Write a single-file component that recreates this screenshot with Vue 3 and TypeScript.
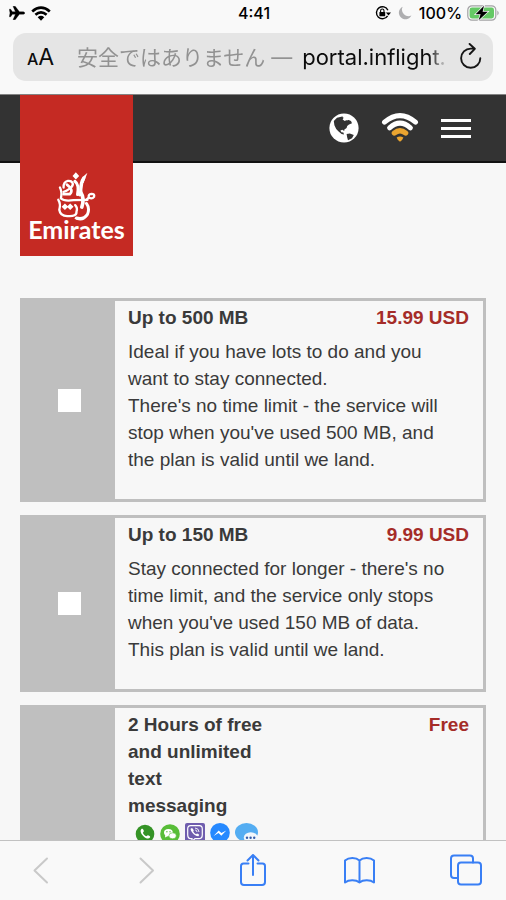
<script setup lang="ts">
import { ref } from 'vue'

interface Plan {
  id: string
  lines: string[]
  price: string
  description: string[]
  messaging: boolean
}

const plans: Plan[] = [
  {
    id: 'mb500',
    lines: ['Up to 500 MB'],
    price: '15.99 USD',
    description: [
      'Ideal if you have lots to do and you want to stay connected.',
      "There's no time limit - the service will stop when you've used 500 MB, and the plan is valid until we land.",
    ],
    messaging: false,
  },
  {
    id: 'mb150',
    lines: ['Up to 150 MB'],
    price: '9.99 USD',
    description: [
      "Stay connected for longer - there's no time limit, and the service only stops when you've used 150 MB of data.",
      'This plan is valid until we land.',
    ],
    messaging: false,
  },
  {
    id: 'free',
    lines: ['2 Hours of free', 'and unlimited text', 'messaging'],
    price: 'Free',
    description: [],
    messaging: true,
  },
]

const selected = ref<string>('')
</script>

<template>
  <div class="screen">
    <div class="status">
      <div class="status-side">
        <svg class="plane" viewBox="0 0 16 14"><path d="M0.3 3.2H1.7L3.4 5.7H6.4L4 0.3H6.2L10.4 5.7H13.6C16.6 5.7 16.6 8.3 13.6 8.3H10.4L6.2 13.7H4L6.4 8.3H3.4L1.7 10.8H0.3L1 7Z" stroke="#000" stroke-width="0.3" /></svg>
        <svg class="wifi" viewBox="0 0 20 15"><path d="M1.2 5.4Q10 -2.2 18.8 5.4M4.4 8.7Q10 4 15.6 8.7" fill="none" stroke="#000" stroke-width="2.7" /><path d="M6.7 11.2Q10 8.5 13.3 11.2L10 14.7Z" /></svg>
      </div>
      <span class="time">4:41</span>
      <div class="status-side right">
        <svg class="lock" viewBox="0 0 16 16"><path d="M12.6 10.8A6 6 0 1 1 12.9 5.2" fill="none" stroke="#000" stroke-width="1.4" /><path d="M10.9 7.4H16L13.5 10.6Z" /><rect x="4.4" y="6.9" width="5.8" height="4.4" rx="0.6" /><path d="M5.6 7V5.7A1.7 1.7 0 0 1 9 5.7V7" fill="none" stroke="#000" stroke-width="1.1" /></svg>
        <svg class="moon" viewBox="0 0 14 14"><path d="M4.7 0.7A6.6 6.6 0 1 0 13.4 9.6A6.6 6.6 0 0 1 4.7 0.7Z" fill="#aeaeb0" /></svg>
        <span class="percent">100%</span>
        <svg class="battery" viewBox="0 0 32 16"><rect x="0.8" y="0.8" width="28" height="14.4" rx="4.2" fill="none" stroke="#a2a2a4" stroke-width="1.2" /><rect x="2.6" y="2.6" width="24.4" height="10.8" rx="2.4" fill="#65c965" /><path d="M30.4 5.5Q33 8 30.4 10.5Z" fill="#a2a2a4" /><path d="M17 0.8L8.6 9.2H13.6L11.6 15.2L20.8 6.8H15.6Z" stroke="#f9f9f9" stroke-width="1.4" paint-order="stroke" /></svg>
      </div>
    </div>

    <div class="address-row">
      <div class="address">
        <button class="text-size" type="button" aria-label="Text size"><span class="small-a">A</span><span class="big-a">A</span></button>
        <button class="url" type="button"><span class="insecure">安全ではありません — </span>portal.inflight.</button>
        <button class="reload" type="button" aria-label="Reload">
          <svg viewBox="0 0 24 28"><path d="M21.3 15.2A9.6 9.6 0 1 1 11.7 5.6H15.6M10.6 1L15.8 5.8L10.8 11" fill="none" stroke="#161616" stroke-width="1.9" stroke-linecap="round" stroke-linejoin="round" /></svg>
        </button>
      </div>
    </div>

    <div class="page">
      <header class="site-header">
        <a class="logo" href="#" aria-label="Emirates">
          <svg class="emblem" viewBox="172 246 122 148" aria-hidden="true">
            <g fill="none" stroke="#fff" stroke-linecap="round">
              <path d="M255 264Q246 278 246 298T242 314" stroke-width="10" />
              <path d="M228 274Q242 284 236 314" stroke-width="9" />
              <path d="M194 293C193 268 220 268 222 282C222 292 203 304 194 306" stroke-width="7" />
              <path d="M204 284Q226 300 213 313H194" stroke-width="8" />
              <path d="M183 293Q190 306 186 326Q196 335 224 331L266 330" stroke-width="7" />
              <path d="M246 308Q258 326 249 352" stroke-width="11" />
              <path d="M270 323Q268 313 278 312Q289 312 286 321Q280 329 270 323L262 331" stroke-width="7" />
              <path d="M178 330Q186 342 181 360Q184 380 207 379Q234 381 233 366Q237 354 229 346" stroke-width="7" />
              <path d="M263 341Q274 356 266 374Q254 391 233 385" stroke-width="9" />
            </g>
            <path d="M231 247L241 258L231 269L221 258ZM198 341L208 351L198 361L188 351ZM214 341L224 351L214 361L204 351ZM266 248Q254 256 246 272L254 280ZM225 386Q252 404 270 374L258 386Z" fill="#fff" />
          </svg>
          <span class="wordmark">Emirates</span>
        </a>
        <nav class="header-nav">
          <button class="nav-button globe" type="button" aria-label="Language">
            <svg viewBox="0 0 30 30"><circle cx="15" cy="15" r="14.6" fill="#fff" /><path d="M4.8 8.1L8 4.7L13.2 3.5L15 4.4L13.6 6.4L15.8 8L18.5 6.4L22 8L23 10.3L20 11.4L18.2 13L17.6 15L15.4 16.4L15.2 18L13.4 16.8L11.4 17.4L12.4 19.3L14.4 19.4L15 21.4L12.6 21L9.6 18.6L7.2 16L5.4 12.2ZM17.6 21L20.8 20.6L24.8 22L23 25.2L19 27.3L18.2 24.4Z" fill="#333" /><path d="M13.5 4.5L18 4L21.4 6L18 7.4L16 6.2Z" fill="#fff" /></svg>
          </button>
          <button class="nav-button signal" type="button" aria-label="Wi-Fi status">
            <svg viewBox="0 0 38 30"><g fill="none" stroke-linecap="round"><path d="M3.5 9.2Q19 -4 34.5 9.2" stroke="#fff" stroke-width="5" /><path d="M8.6 14.8Q19 5.6 29.4 14.8" stroke="#fff" stroke-width="5" /><path d="M13.4 20Q19 15.4 24.6 20" stroke="#eba530" stroke-width="5.4" /></g><path d="M15.6 24.6Q19 22.2 22.4 24.6Q21.5 27.5 19 28.8Q16.5 27.5 15.6 24.6Z" fill="#eba530" /></svg>
          </button>
          <button class="nav-button menu" type="button" aria-label="Menu"><span class="bar"></span><span class="bar"></span><span class="bar"></span></button>
        </nav>
      </header>

      <main class="plans">
        <label v-for="plan in plans" :key="plan.id" class="plan" :class="{ tall: plan.messaging }">
          <span class="pick"><input v-model="selected" type="radio" name="plan" :value="plan.id"></span>
          <span class="details">
            <span class="heading">
              <span class="title">
                <span v-for="line in plan.lines" :key="line" class="title-line">{{ line }}</span>
                <span v-if="plan.messaging" class="apps">
                  <svg viewBox="0 0 20 20"><circle cx="10" cy="11" r="9.3" fill="#359326" /><path d="M2.6 17.5L1 20L6 19Z" fill="#359326" /><path d="M6.2 6.2C5 7.6 5.4 10 8.2 13C11 15.8 13.7 16.3 15 14.6C15.6 13.6 14.8 13 13 12.2C12.1 12 11.8 13.6 10.8 13C9.6 12.4 8.5 11.2 8 10C8 9 9.2 8.8 8.8 7.8C8 5.8 7.4 5.4 6.2 6.2Z" fill="#fff" /></svg>
                  <svg viewBox="0 0 20 20"><circle cx="10" cy="11" r="9.8" fill="#58bd38" /><ellipse cx="8.4" cy="9.6" rx="4.4" ry="3.6" fill="#fff" /><path d="M5.4 11.6L5 14.4L8 13Z" fill="#fff" /><ellipse cx="12.6" cy="12.8" rx="3.7" ry="3" fill="#fff" stroke="#58bd38" stroke-width="0.6" /><g fill="#58bd38"><circle cx="6.9" cy="8.8" r="0.7" /><circle cx="10" cy="8.8" r="0.7" /></g></svg>
                  <svg viewBox="0 0 20 20"><rect width="20" height="20" rx="2" fill="#6f5dae" /><path d="M5.6 2.7H14.4Q17.3 2.7 17.3 6V11.6Q17.3 15.6 14.4 15.6H10L7 18.4V15.6H5.6Q2.7 15.6 2.7 11.6V6Q2.7 2.7 5.6 2.7Z" fill="none" stroke="#fff" stroke-width="1.2" /><path d="M6 5.2Q4.8 6.4 7.4 9.8T13.4 13.2Q15 12 13.4 11L12 10.4L11 11.3Q9 10.4 8.2 8.2L8.8 7.3L7.4 5.2Z" fill="#fff" /><path d="M10 5Q14 5.4 14 9M10.2 7Q12 7.2 12 9" fill="none" stroke="#fff" stroke-width="0.9" /></svg>
                  <svg viewBox="0 0 20 20"><circle cx="10" cy="9.8" r="9.8" fill="#2689ff" /><path d="M3.6 13L8.7 7.4L11.4 10.1L16.3 7.4L11.3 12.8L8.5 10.1Z" fill="#fff" /></svg>
                  <svg class="chat" viewBox="0 0 24 20"><ellipse cx="11.5" cy="9.3" rx="11.5" ry="9.3" fill="#54adf2" /><path d="M5 16L3 20H9Z" fill="#54adf2" /><ellipse cx="15.8" cy="14.6" rx="7" ry="5.4" fill="#f1f7fc" /><g fill="#345caa"><circle cx="12" cy="14.8" r="1.2" /><circle cx="15.6" cy="14.8" r="1.2" /><circle cx="19.2" cy="14.8" r="1.2" /></g></svg>
                </span>
              </span>
              <span class="price">{{ plan.price }}</span>
            </span>
            <span v-for="text in plan.description" :key="text" class="description">{{ text }}</span>
          </span>
        </label>
      </main>
    </div>

    <nav class="toolbar">
      <button type="button" aria-label="Back"><svg viewBox="0 0 34 34"><path d="M23 4.5L10.5 16.5L23 28.5" stroke="#c9c9c9" /></svg></button>
      <button type="button" aria-label="Forward"><svg viewBox="0 0 34 34"><path d="M10.5 4.5L23 16.5L10.5 28.5" stroke="#c9c9c9" /></svg></button>
      <button type="button" aria-label="Share"><svg viewBox="0 0 34 34"><path d="M12.5 9.5H7.5Q5 9.5 5 12V28Q5 31 8 31H26Q29 31 29 28V12Q29 9.5 26.5 9.5H21.5M17 21V1M11.5 6.5L17 1L22.5 6.5" /></svg></button>
      <button type="button" aria-label="Bookmarks"><svg viewBox="0 0 34 34"><path d="M17.5 6.5C14 3.2 7 3 3 6.5V28.5C7 25.5 14 25.8 17.5 28.5C21 25.8 28 25.5 32 28.5V6.5C28 3 21 3.2 17.5 6.5V28.5" /></svg></button>
      <button type="button" aria-label="Tabs"><svg viewBox="0 0 34 34"><rect x="10" y="8.5" width="23" height="22" rx="3" /><path d="M10 24H6Q3 24 3 21V4.5Q3 1.5 6 1.5H22Q25 1.5 25 4.5V8.5" /></svg></button>
    </nav>
  </div>
</template>

<style>
body {
  margin: 0;
  background: #f7f7f7;
}
</style>

<style scoped>
.screen {
  display: flex;
  flex-direction: column;
  height: 100vh;
  overflow: hidden;
  background: #f7f7f7;
  color: #3a3a3a;
  font-family: "Liberation Sans", "Noto Sans CJK JP", sans-serif;
}
button {
  margin: 0;
  padding: 0;
  border: 0;
  background: none;
  color: inherit;
  font: inherit;
}
svg {
  display: block;
}
.status {
  display: flex;
  flex-shrink: 0;
  align-items: center;
  height: 26px;
  padding: 0 7px 0 9px;
  background: #f9f9f9;
  color: #000;
  font-family: Inter, sans-serif;
  font-size: 16px;
  font-weight: 500;
}
.status-side {
  display: flex;
  flex: 1;
  align-items: center;
  gap: 6px;
}
.right {
  justify-content: flex-end;
  gap: 5px;
}
.plane {
  width: 16px;
  height: 14px;
}
.wifi {
  width: 20px;
  height: 15px;
}
.lock {
  width: 16px;
  height: 16px;
}
.moon {
  width: 14px;
  height: 14px;
  margin: 0 2px;
}
.battery {
  width: 32px;
  height: 16px;
}
.address-row {
  flex-shrink: 0;
  padding: 7px 13px 13px;
  border-bottom: 1px solid #838383;
  background: #f9f9f9;
}
.address {
  display: flex;
  align-items: center;
  height: 48px;
  padding: 0 10px 0 14px;
  border-radius: 13px;
  background: #e5e5e5;
  color: #0c0c0c;
  font-family: Inter, "Noto Sans CJK JP", sans-serif;
}
.text-size {
  display: flex;
  align-items: baseline;
  width: 50px;
}
.small-a {
  font-size: 16px;
  font-weight: 500;
}
.big-a {
  font-size: 23px;
}
.url {
  flex: 1;
  min-width: 0;
  overflow: hidden;
  font-size: 22px;
  line-height: 32px;
  text-align: left;
  white-space: nowrap;
  mask-image: linear-gradient(to left, transparent 2px, #000 20px);
}
.insecure {
  padding-right: 4px;
  color: #929292;
  font-size: 21px;
}
.reload {
  margin-left: 10px;
}
.reload svg {
  width: 24px;
  height: 28px;
}
.page {
  flex: 1;
  min-height: 0;
  overflow: hidden;
}
.site-header {
  display: flex;
  align-items: flex-start;
  justify-content: space-between;
  box-sizing: border-box;
  height: 68px;
  padding: 0 35px 0 20px;
  border-bottom: 2px solid #111;
  background: #333;
}
.logo {
  display: flex;
  flex-shrink: 0;
  flex-direction: column;
  align-items: center;
  justify-content: flex-end;
  box-sizing: border-box;
  width: 113px;
  height: 161px;
  padding-bottom: 19px;
  background: #c52a23;
  color: #fff;
  text-decoration: none;
}
.emblem {
  width: 41px;
  height: 49px;
}
.wordmark {
  font-family: Lato, sans-serif;
  font-size: 25px;
  font-weight: 700;
  line-height: 16px;
}
.header-nav {
  display: flex;
  align-items: center;
  gap: 22px;
  height: 66px;
}
.globe svg {
  width: 30px;
  height: 30px;
}
.signal svg {
  width: 38px;
  height: 30px;
}
.menu {
  display: flex;
  flex-direction: column;
  gap: 5px;
  width: 30px;
}
.bar {
  height: 3px;
  background: #fff;
}
.plans {
  display: flex;
  flex-direction: column;
  gap: 13px;
  padding: 135px 20px 0;
}
.plan {
  display: flex;
  border: 3px solid #bfbfbf;
  font-size: 19px;
  line-height: 27px;
}
.tall {
  min-height: 314px;
}
.pick {
  display: flex;
  flex-shrink: 0;
  align-items: center;
  justify-content: center;
  width: 92px;
  background: #bfbfbf;
}
.pick input {
  width: 23px;
  height: 23px;
  margin: 0;
  background: #fff;
  appearance: none;
}
.pick input:checked {
  border: 6px solid #fff;
  background: #c52a23;
}
.details {
  flex: 1;
  min-width: 0;
  padding: 3px 14px 26px 13px;
}
.heading {
  display: flex;
  align-items: flex-start;
  justify-content: space-between;
  margin-bottom: 7px;
  font-weight: 700;
}
.title {
  width: 140px;
}
.title-line {
  display: block;
}
.price {
  color: #a52c28;
}
.description {
  display: block;
  padding-right: 18px;
}
.apps {
  display: flex;
  gap: 5px;
  padding: 4px 0 0 7px;
}
.apps svg {
  flex-shrink: 0;
  width: 20px;
  height: 20px;
}
.apps .chat {
  width: 24px;
}
.toolbar {
  display: flex;
  flex-shrink: 0;
  align-items: center;
  justify-content: space-between;
  box-sizing: border-box;
  height: 60px;
  padding: 0 24px;
  border-top: 1px solid #c2c2c2;
  background: #f9f9f9;
}
.toolbar svg {
  width: 34px;
  height: 34px;
  fill: none;
  stroke: #397ff5;
  stroke-width: 2;
  stroke-linecap: round;
  stroke-linejoin: round;
}
</style>
